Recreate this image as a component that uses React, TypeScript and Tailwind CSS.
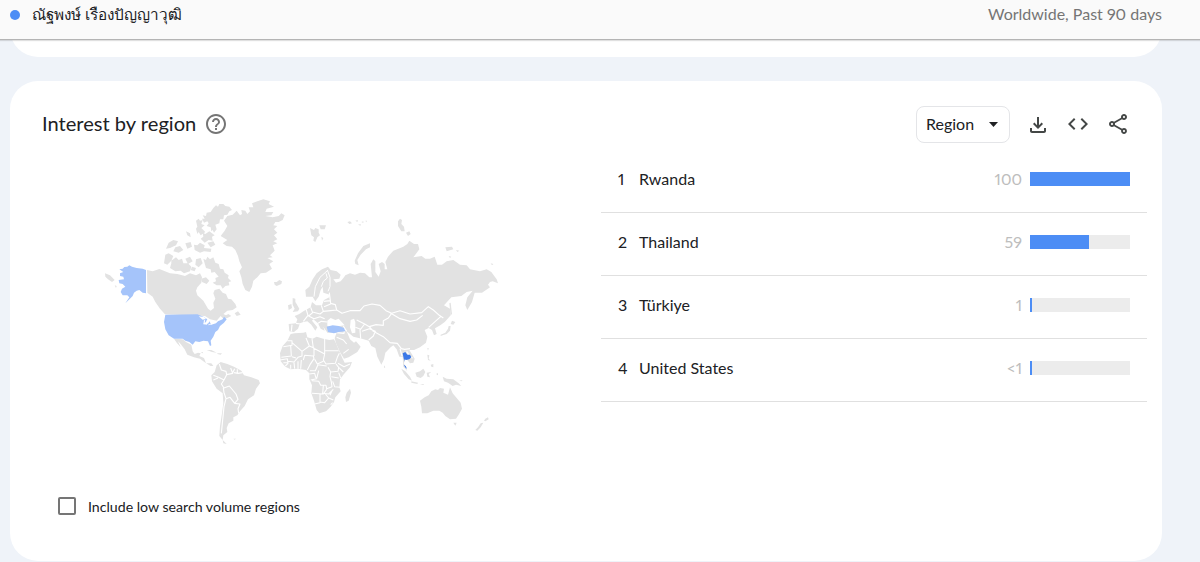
import {
  MdCode,
  MdHelpOutline,
  MdOutlineFileDownload,
  MdOutlineShare,
} from "react-icons/md";

const regions = [
  { name: "Rwanda", value: "100", width: 100 },
  { name: "Thailand", value: "59", width: 59.4 },
  { name: "Türkiye", value: "1", width: 1.5 },
  { name: "United States", value: "<1", width: 1.5 },
];

const WorldMap = () => {
  return (
    <svg
      viewBox="0 0 1230 780"
      className="ml-20 mt-12 h-[260px] w-[410px]"
      fill="#e2e2e2"
      strokeLinejoin="round"
    >
      {/* Canada and the arctic islands */}
      <path d="M171 240L188 244 208 237 225 244 240 250 262 252 285 258 300 250 318 256 330 250 336 262 334 278 322 292 318 302 322 316 340 332 348 346 354 356 362 362 372 354 370 338 376 326 370 310 374 300 388 296 398 308 408 312 414 326 424 328 436 342 440 352 428 360 412 362 400 372 408 376 415 372 424 378 412 384 400 386 392 378 380 392 360 388 345 378 225 373 210 356 196 336 188 320 172 308z" />
      <path d="M45 250L60 256 74 270 66 276 54 268 46 260zM74 286l6 2-2 6z" />
      <path d="M378 46l6 4 4-8 12 0 6 6 12 2 8 10-8 4-6 10-10 2-2 12-10 0-2 12-12 4 4 14-8 10-4-8-4 4-2-12-12-4 6-8-4-6-10 4-6-12 8 0-6-10 10 2 2-10 12-2 8-12z" />
      <path d="M318 92l8-6 4 6 8-2-4 12 10 4-10 8 12 12-14 10-6-10-4 6-4-16 4-6zM338 128l8 4 12-8 16 12-8 4 2 12-12-2-12 8-12-12 8-6zM352 158l18-4 6 10-14 8zM288 124l12 6 2 12-10-6zM236 158l14-8 14 4-6 12-18 8-12 2zM256 172l14-4 10 12-14 8-16-4zM286 160l16-4 4 14-14 6zM312 164l10 2 8-8 14 8-2 8 22 2-2 10-20-2-12 4-16-8z" />
      <path d="M226 194l10-4 14 8-6 14-12 12-10-4zM244 212l14-10 8 8 10-4 4 14 14 0 10 10-4 14-18 6-10-8-16 2-16-10 4-14zM286 206l14-6 8 14-14 8zM318 208l14-4 6 16-12 12-10-8zM306 230l12 4-4 10-12-4z" />
      <path d="M340 206l8 4 4-10 8 8 10-6 6 16 10 4 4 14 10 2 4 10 12 8-2 8 10 10-8 2 2 10-12 2-8 8-6-10-12 0-12-8 10-4-2-10 10-4-12-14-10 2-2-10-14-4zM334 266l14-4 10 10-8 10-14-6zM434 370l10-6 8 10-12 4z" />

      {/* Greenland, Iceland, British Isles, northern islands */}
      <g transform="translate(390 0)">
        <path d="M12 92L22 78 38 74 50 62 60 76 66 72 64 60 76 62 82 72 90 64 86 52 100 52 96 40 112 34 130 28 150 34 146 42 162 50 140 56 136 66 160 66 154 76 136 78 158 82 176 78 184 70 194 76 188 90 176 96 166 96 160 106 172 108 162 118 172 128 162 136 172 148 160 154 172 160 158 166 164 182 150 196 158 202 142 204 160 214 148 222 156 236 138 248 122 250 112 262 100 272 96 290 88 306 76 300 68 282 64 262 58 244 66 232 58 214 54 198 46 180 36 170 20 168 8 160 22 150 2 138 14 122 22 108z" />
        <path d="M162 276l8 0 8-6 8 4-2 8-14 6-6-4zM270 114l12 6 4-6 10 4 0 10 4 8-8 6-6 14-6-4 2-10-8-6zM298 106l20 0-4 12-12 0zM304 140l6 4-4 8zM382 96l8-2 6 6-8 2zM406 92l8-2-2 6zM414 104l8-2 0 5zM424 96l6-2 0 5zM436 92l5 0-2 5z" />
        <path d="M218 324l8 2 0 10 4 6 8 14-4 8-16 2 6-10-6-12zM204 346l10-4 2 12-10 6z" />
        <path d="M450 160L430 168 414 190 404 212 406 222 416 226 412 210 422 194 438 178 450 172z" />
      </g>

      {/* Eurasia */}
      <path d="M646 300L658 290 668 268 680 250 696 238 714 230 722 240 740 244 752 254 748 266 730 268 738 278 752 274 762 262 766 256 780 250 795 254 810 248 825 250 838 262 846 262 842 222 850 208 856 214 856 246 866 260 872 244 866 222 876 216 884 222 884 238 892 238 886 216 894 200 910 182 940 170 952 162 958 152 972 162 984 162 988 178 970 202 995 198 1006 206 1020 206 1034 200 1042 224 1056 224 1070 214 1090 210 1110 224 1130 226 1140 238 1170 244 1190 238 1204 246 1210 254 1220 268 1224 280 1208 274 1200 276 1194 284 1200 292 1176 308 1154 308 1146 336 1132 360 1126 346 1132 322 1148 302 1130 306 1114 318 1084 322 1062 346 1080 356 1082 376 1065 395 1052 405 1035 415 1040 432 1032 436 1026 420 1016 414 1004 420 1012 440 1008 458 990 472 972 480 958 480 974 506 970 518 960 520 950 508 944 510 942 520 952 544 940 530 938 500 928 500 920 478 910 466 902 472 886 488 882 508 874 524 862 500 856 474 844 468 836 452 816 446 790 440 770 424 780 448 792 458 798 454 812 470 802 486 776 502 762 506 750 486 738 460 734 444 740 428 712 428 700 410 704 422 692 416 684 400 670 388 666 392 682 412 676 422 664 404 652 394 640 396 630 400 624 416 612 426 598 424 596 402 618 400 622 388 614 378 628 372 640 364 662 352 666 336 678 346 696 346 702 330 718 322 720 314 700 308 698 290 692 300 686 320 676 334 668 320 648 320z" />
      <path d="M712 392L722 384 736 390 746 386 764 406 750 408 712 408zM782 390l10-4 4 10 0 32-10 2-6-18z" fill="#fff" />
      <path d="M694 290L700 274 712 264 708 250M672 320L676 290 690 262 712 242M712 240L720 262 720 290 714 304" fill="none" stroke="#fff" strokeWidth="3" />
      <path
        d="M718 308L722 340 736 344 740 360 756 370 780 362 810 362 822 348 846 342 870 346 888 362 905 370 930 362 960 372 995 368 1015 350 1030 360 1048 376 1060 384M905 370L895 384 880 392 880 406 858 404 838 410 824 402 812 396 800 390M900 368L930 386 960 394 980 390 998 376M838 410L850 424 880 440 900 458 922 460 934 476 944 478 960 476M824 402L810 420 812 446M836 450L850 438 856 424 838 416 816 424M796 412L812 418M770 424L760 408M740 428L762 430 764 414M740 442L760 450 770 462M776 478L760 490M1052 380L1036 394 1016 412M646 350L654 376 640 394M618 400L632 402M662 352L668 368 656 378 672 386 690 380 704 386M694 346L700 364 690 372 668 366M700 364L722 362 740 360M702 350L722 342M702 334L720 332M684 400L694 394 712 396M606 404L604 424M930 476L936 498M950 484L960 500 968 504"
        fill="none"
        stroke="#fff"
        strokeWidth="3.4"
      />
      <g transform="translate(780 0)">
        <path d="M144 108l0-14 6-8 6 4-2 12 8 8 2 14-10 0zM168 128l10-4 4 8-8 6zM286 172l20-2 4 8-20 6zM318 180l10 2-6 4zM296 198l8 2-4 4zM422 220l8 2-4 4zM298 340l4-2 4 34-4 4z" />
      </g>

      {/* Africa */}
      <g transform="translate(540 360)">
        <path d="M62 72L74 70 100 68 108 66 112 82 128 86 140 80 160 86 178 90 192 88 198 100 208 124 218 146 224 158 246 156 240 172 222 192 210 208 208 232 212 244 196 262 192 276 182 290 168 304 148 310 140 300 132 272 124 250 126 226 118 208 118 190 108 180 84 176 62 178 46 170 32 154 30 130 38 108 52 92zM240 236l3 12-7 24-8 4-2-14 4-14z" />
        <path
          d="M52 92L66 92 66 106 40 110M66 98L96 124 118 108 108 84M62 106L64 138 34 142M30 150L52 146 54 160 46 168M54 154L72 156 84 142 96 138 96 124M72 158L74 176M84 154L84 176M94 150L92 176M100 150L104 136 130 138 132 146 120 164 112 180M118 108L132 114 132 138M126 86L130 114 164 132 164 86M164 122L206 122M164 132L160 150 168 162 196 160 202 142 208 130M134 148L142 162 160 154M120 182L136 182 144 164 170 168M118 192L134 190 138 204M146 182L140 206 122 210M126 212L146 214 152 226 168 226 170 236 186 230 184 216 180 200 182 186 174 172M182 186L204 184 206 172 198 162M206 172L220 186M206 188L212 204M184 200L206 204M188 214L194 230 210 232M170 238L160 252 126 250M160 226L158 250 176 252 190 238M150 252L150 278 134 282M150 276L164 278 176 264 166 252M176 264L190 270M180 256L186 242M204 160L222 170 240 162M182 284L188 278M66 140L78 144M40 158L52 158M62 164L62 176"
          fill="none"
          stroke="#fff"
          strokeWidth="3.2"
        />
      </g>

      {/* Mexico, Central and South America */}
      <g transform="translate(180 360)">
        <path d="M72 86L98 88 108 96 124 104 128 124 134 132 144 128 152 130 148 138 162 144 168 160 184 160 190 168 182 168 166 158 150 146 132 142 112 134 104 118 92 102 84 94 92 112 80 98zM170 120l14 0 16 8-14-2zM202 130l14 0-4 4-10-2zM152 128l6-2 2 4z" />
        <path d="M200 166L212 156 232 162 252 170 274 182 282 196 304 202 326 210 330 220 318 236 312 256 294 268 284 288 270 304 262 316 250 322 250 332 236 340 230 354 232 366 220 376 218 390 208 378 210 348 216 310 220 280 218 250 200 236 186 214 184 196 194 186zM218 390l12 12-10-2zM250 386l8 0-4 3z" />
        <path
          d="M208 162L214 180 228 184 230 194 222 210 206 202 190 196M222 210L214 222 222 234 238 228 258 252 264 268 254 280 240 262 228 266 222 248 220 234M230 194L248 190 242 174M248 188L254 176M252 188L264 190 278 188M262 178L262 190M228 266L222 290 218 330 214 370M254 280L270 282 264 296 266 310M190 210L204 204"
          fill="none"
          stroke="#fff"
          strokeWidth="3.4"
        />
      </g>

      {/* South-east Asia and Oceania */}
      <g transform="translate(840 360)">
        <path d="M150 272L164 262 176 256 184 244 196 238 204 240 210 234 222 236 220 248 234 254 240 232 248 250 258 262 272 278 276 296 266 314 258 326 240 328 226 318 218 308 208 302 190 302 172 310 156 310 154 290zM250 338l10 0-4 9zM346 326l8-4 2 6-10 6-4-2zM340 338l-8 14-10 10-6-2 8-8 8-12z" />
        <path d="M94 176l12 8 14 16 6 12-10-4-14-16zM124 214l20 4-2 4-18-4zM136 188l14-4 10-8 6 10-6 12-8 6-12-4zM170 188l14-2-8 6 4 10-8-2zM172 134l6 2-2 10 6 6-8-2zM182 164l8-2 0 10-6-2zM200 190l4 0 0 6-4-2zM218 200l12 6 20 2 16 12 8 8-16-4-10 4-14-10-12-4zM268 212l10-2-4 4zM150 222l12 0-2 3zM42 166l4 6-4 2zM172 114l4 0-2 8z" />
        <path d="M246 32l10 4-6 8-8-2zM242 48l-2 14-10 10-12 4-6 2 0-4 14-6 8-12 2-8z" />
      </g>

      {/* highlighted countries */}
      <g fill="#a5c4fa">
        <path d="M88 238L98 236 103 231 112 230 118 226 126 230 140 234 158 236 168 240 168 310 158 308 148 300 140 302 132 308 128 318 116 330 106 340 118 322 112 316 98 316 92 306 96 296 106 290 98 282 88 280 86 270 102 268 100 260 90 258 90 250 100 246z" />
        <path
          d="M226 374L322 373 340 380 352 388 348 396 340 402 350 404 358 394 364 404 378 400 384 394 398 388 402 380 410 388 402 398 390 408 384 420 376 426 370 440 362 452 364 466 360 468 354 454 340 452 328 456 316 454 308 464 298 456 286 452 278 446 252 446 236 436 226 418 222 396z"
        />
        <path d="M710 410L728 406 746 408 762 414 766 424 746 426 732 430 714 426z" />
      </g>
      <path d="M326 379l16 2 6 6-10 2zM342 390l3 1-1 12-4 0zM350 391l8 3-4 7-3-3zM354 404l12-4 0 3-10 3z" fill="#fff" />
      <path
        d="M938 490L946 486 952 494 960 494 964 502 958 508 948 510 944 508 942 516 942 510 940 500zM941 524l6 4 4 8-4-2z"
        fill="#3b78e7"
      />
    </svg>
  );
};

const App = () => {
  return (
    <div className="h-[562px] w-[1200px] overflow-hidden bg-[#eff3f9] font-[Lato,sans-serif] text-[#202124] proportional-nums">
      <div className="relative flex h-10 items-start justify-between border-b border-[#b4b4b4] bg-[#fafafa] pl-[10px] pr-[38px] pt-[3px] shadow-[0_1px_1px_rgba(0,0,0,0.12)]">
        <div className="flex items-center gap-3">
          <div className="mt-[2px] size-[10px] rounded-full bg-[#4c8df5]" />
          <div className="text-[15.3px] leading-[22px]">
            ณัฐพงษ์ เรืองปัญญาวุฒิ
          </div>
        </div>
        <div className="text-[16px] leading-[22px] text-[#757575]">
          Worldwide, Past 90 days
        </div>
      </div>
      <div className="ml-[10px] h-[17px] w-[1152px] overflow-hidden">
        <div className="-mt-10 h-[57px] rounded-[28px] bg-white" />
      </div>

      <div className="ml-[10px] mt-6 h-[480px] w-[1152px] rounded-[28px] bg-white pt-[25px]">
        <div className="flex h-9 items-center justify-between pl-8 pr-8">
          <div className="flex items-center gap-2">
            <div className="pb-[2px] text-[20.1px] leading-6">
              Interest by region
            </div>
            <MdHelpOutline className="size-6 text-[#757575]" />
          </div>
          <div className="flex items-center">
            <div className="mr-4 flex h-[37px] w-[94px] items-center justify-between rounded-lg border border-[#e4e5e8] pl-[9px] pr-[11px]">
              <span className="text-[16px]">Region</span>
              <svg viewBox="0 0 9 5" className="h-[5px] w-[9px]">
                <path d="M0 0h9L4.500 5z" fill="#202124" />
              </svg>
            </div>
            <div className="flex items-center gap-4 text-[#444746]">
              <MdOutlineFileDownload className="mt-[2px] size-6" />
              <MdCode className="size-6" />
              <MdOutlineShare className="size-6" />
            </div>
          </div>
        </div>

        <div className="flex">
          <div className="w-[591px]">
            <WorldMap />
            <div className="ml-12 mt-[46px] flex items-center gap-3">
              <div className="size-[18px] rounded-[2px] border-2 border-[#757575]" />
              <div className="pt-px text-[14.15px] leading-[19px]">
                Include low search volume regions
              </div>
            </div>
          </div>
          <div className="w-[546px] pt-2">
            {regions.map((region, index) => (
              <div
                key={region.name}
                className="flex h-[63px] items-center border-b border-[#e0e0e0] pb-[5px] pl-[17px] pr-[17px] text-[16px]"
              >
                <div className="w-[21px]">{index + 1}</div>
                <div className="grow">{region.name}</div>
                <div className="mr-2 text-[#bdbdbd]">{region.value}</div>
                <div className="h-[14px] w-[100px] bg-[#ececec]">
                  <div
                    className="h-full bg-[#4c8df5]"
                    style={{ width: region.width }}
                  />
                </div>
              </div>
            ))}
          </div>
        </div>
      </div>
    </div>
  );
};

export default App;
